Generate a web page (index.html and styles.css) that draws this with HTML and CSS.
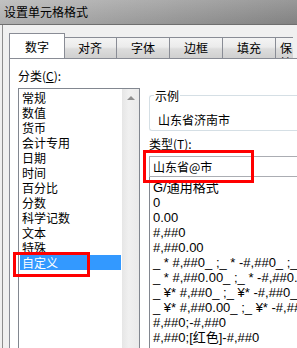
FILE: index.html
```html
<!doctype html>
<html>
	<head>
		<title>设置单元格格式</title>
		<meta charset="UTF-8">
		<link rel="stylesheet" href="styles.css">
	</head>
	<body>
		<div class="titlebar">设置单元格格式</div>
		<div class="dialog">
			<div class="tabs">
				<div class="tab active">数字</div>
				<div class="tab">对齐</div>
				<div class="tab">字体</div>
				<div class="tab">边框</div>
				<div class="tab">填充</div>
				<div class="tab last">保护</div>
			</div>
			<div class="panel">
				<div class="col-left">
					<div class="label">分类(<u>C</u>):</div>
					<div class="listbox">
						<ul class="items">
							<li>常规</li>
							<li>数值</li>
							<li>货币</li>
							<li>会计专用</li>
							<li>日期</li>
							<li>时间</li>
							<li>百分比</li>
							<li>分数</li>
							<li>科学记数</li>
							<li>文本</li>
							<li>特殊</li>
							<li class="selected">自定义</li>
						</ul>
						<div class="scrollbar"><span class="arrow-up"></span></div>
					</div>
				</div>
				<div class="col-right">
					<fieldset class="sample">
						<legend>示例</legend>
						<div>山东省济南市</div>
					</fieldset>
					<div class="label type-label">类型(<u>T</u>):</div>
					<div class="type-input">山东省@市</div>
					<ul class="formats">
						<li>G/通用格式</li>
						<li>0</li>
						<li>0.00</li>
						<li>#,##0</li>
						<li>#,##0.00</li>
						<li>_ * #,##0_ ;_ * -#,##0_ ;_ * "-"_ ;_ @_ </li>
						<li>_ * #,##0.00_ ;_ * -#,##0.00_ ;_ * "-"??_ ;_ @_ </li>
						<li>_ ¥* #,##0_ ;_ ¥* -#,##0_ ;_ ¥* "-"_ ;_ @_ </li>
						<li>_ ¥* #,##0.00_ ;_ ¥* -#,##0.00_ ;_ ¥* "-"??_ ;_ @_ </li>
						<li>#,##0;-#,##0</li>
						<li>#,##0;[红色]-#,##0</li>
					</ul>
				</div>
			</div>
		</div>
		<div class="mark mark-custom"></div>
		<div class="mark mark-type"></div>
	</body>
</html>
```

FILE: styles.css
```css
body {
	margin: 0;
	width: 297px;
	height: 348px;
	overflow: hidden;
	position: relative;
	background: #f0f0f0;
	font-family: "Noto Sans CJK SC", sans-serif;
	font-size: 12px;
	line-height: 15px;
	color: #000;
}
ul {
	margin: 0;
	padding: 0;
	list-style: none;
}
.titlebar {
	height: 24px;
	padding-left: 4px;
	line-height: 24px;
	font-size: 12px;
	background: linear-gradient(to bottom, rgba(255,255,255,0.12), rgba(0,0,0,0.06)), linear-gradient(to right, #b9b9b9, #a2a2a2 50%, #8a8a8a);
	border-bottom: 1px solid #6f6f6f;
}
.dialog {
	margin-left: 2px;
	border-left: 1px solid #8d8d8d;
	padding: 8px 0 0 6px;
}
.tabs {
	display: flex;
	align-items: flex-end;
	height: 25px;
	overflow: hidden;
}
.tab {
	flex: none;
	box-sizing: border-box;
	width: 54px;
	height: 21px;
	margin-left: -1px;
	padding-top: 2px;
	text-align: center;
	border: 1px solid #898c95;
	border-bottom: none;
	background: linear-gradient(to bottom, #f4f4f4, #ebebeb 45%, #dcdcdc 55%, #d0d0d0);
}
.tab.last {
	width: 18px;
	text-align: left;
	padding-left: 4px;
	overflow: hidden;
	border-right: none;
}
.tab.active {
	position: relative;
	z-index: 1;
	width: 56px;
	height: 26px;
	margin: 0 -1px -1px 0;
	padding-top: 5px;
	background: #fff;
}
.panel {
	display: flex;
	height: 281px;
	overflow: hidden;
	background: #fff;
	border: 1px solid #898c95;
	border-right: none;
	border-bottom: none;
	padding: 9px 0 0 8px;
}
.label u {
	text-decoration: underline;
}
.listbox {
	display: flex;
	width: 122px;
	height: 266px;
	margin-top: 5px;
	box-sizing: border-box;
	border: 1px solid #828790;
	border-bottom: none;
}
.items {
	flex: 1;
	padding: 1px 1px 0 1px;
}
.items li {
	height: 15px;
	padding-left: 2px;
}
.items li.selected {
	background: #3399ff;
	color: #fff;
}
.scrollbar {
	width: 17px;
	background: linear-gradient(to right, #e6e6e6, #f0f0f0 40%, #eaeaea);
	display: flex;
	justify-content: center;
}
.arrow-up {
	margin-top: 7px;
	width: 0;
	height: 0;
	border-left: 4px solid transparent;
	border-right: 4px solid transparent;
	border-bottom: 4px solid #8f8f8f;
}
.col-right {
	flex: 1;
	min-width: 0;
	margin-left: 9px;
}
.sample {
	margin: 20px 0 0 0;
	padding: 9px 0 3px 8px;
	border: 1px solid #d5dfe5;
	border-right: none;
	border-radius: 3px 0 0 3px;
}
.sample legend {
	margin-left: -4px;
	padding: 0 1px;
}
.type-label {
	margin-top: 5px;
}
.type-input {
	margin-top: 5px;
	height: 21px;
	box-sizing: border-box;
	padding: 2px 0 0 3px;
	border: 1px solid #abadb3;
	border-right: none;
}
.formats {
	height: 170px;
	overflow: hidden;
	padding: 3px 0 0 3px;
	border-left: 1px solid #828790;
	font-family: "Liberation Sans", "Noto Sans CJK SC", sans-serif;
	font-size: 13px;
}
.formats li {
	height: 15px;
	white-space: pre;
}
.mark {
	position: absolute;
	box-sizing: border-box;
	border: 3px solid #ff0000;
}
.mark-custom {
	left: 13px;
	top: 252px;
	width: 77px;
	height: 25px;
}
.mark-type {
	left: 143px;
	top: 150px;
	width: 111px;
	height: 33px;
}
```
